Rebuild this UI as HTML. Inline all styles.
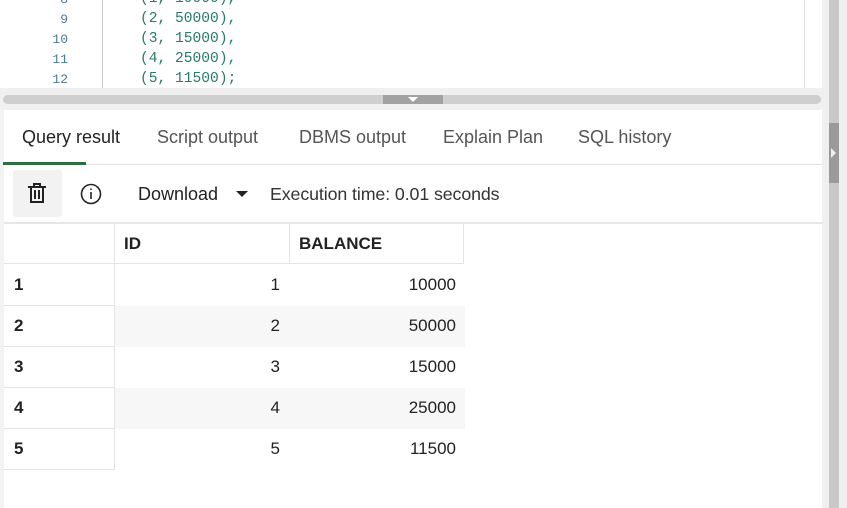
<!DOCTYPE html>
<html><head><style>
*{margin:0;padding:0;box-sizing:border-box}
body{width:847px;height:508px;overflow:hidden;background:#fff;font-family:"Liberation Sans",sans-serif;position:relative}
.abs{position:absolute}
.code{font-family:"Liberation Mono",monospace;font-size:14.6px;color:#2a7a6a}
.ln{font-family:"Liberation Mono",monospace;font-size:13px;color:#4a7a9a;width:68px;text-align:right}
.tab{position:absolute;top:127px;font-size:18px;color:#555}
.cell{position:absolute;font-size:17px;color:#222}
</style></head><body>
<div class="abs" style="left:0;top:0;width:822px;height:88px;background:#fff"></div>
<div class="abs" style="left:102px;top:0;width:1px;height:88px;background:#ccc"></div>
<div class="abs" style="left:804px;top:0;width:1px;height:88px;background:#ddd"></div>
<div class="abs ln" style="left:0;top:-8px">8</div><div class="abs code" style="left:140px;top:-9px">(1, 10000),</div>
<div class="abs ln" style="left:0;top:12px">9</div><div class="abs code" style="left:140px;top:11px">(2, 50000),</div>
<div class="abs ln" style="left:0;top:32px">10</div><div class="abs code" style="left:140px;top:31px">(3, 15000),</div>
<div class="abs ln" style="left:0;top:52px">11</div><div class="abs code" style="left:140px;top:51px">(4, 25000),</div>
<div class="abs ln" style="left:0;top:72px">12</div><div class="abs code" style="left:140px;top:71px">(5, 11500);</div>
<div class="abs" style="left:0;top:88px;width:822px;height:22px;background:#f0f0f0"></div>
<div class="abs" style="left:3px;top:95px;width:818px;height:9px;background:#cfcfcf;border-radius:5px"></div>
<div class="abs" style="left:383px;top:95px;width:60px;height:9px;background:#a2a2a2"></div>
<div class="abs" style="left:408px;top:97px;width:0;height:0;border-left:5px solid transparent;border-right:5px solid transparent;border-top:5px solid #fff"></div>
<div class="abs" style="left:822px;top:0;width:25px;height:508px;background:#efefef"></div>
<div class="abs" style="left:829px;top:0;width:10px;height:508px;background:#c8c8c8"></div>
<div class="abs" style="left:829px;top:123px;width:10px;height:60px;background:#9a9a9a"></div>
<div class="abs" style="left:831px;top:148px;width:0;height:0;border-top:5px solid transparent;border-bottom:5px solid transparent;border-left:5px solid #eee"></div>
<div class="abs" style="left:0;top:110px;width:4px;height:398px;background:#f3f3f3"></div>
<div class="tab" style="left:22px;color:#222">Query result</div>
<div class="tab" style="left:157px">Script output</div>
<div class="tab" style="left:299px">DBMS output</div>
<div class="tab" style="left:443px">Explain Plan</div>
<div class="tab" style="left:578px">SQL history</div>
<div class="abs" style="left:3px;top:162px;width:83px;height:3px;background:#2e6e3e"></div>
<div class="abs" style="left:86px;top:164px;width:736px;height:1px;background:#e2e2e2"></div>
<div class="abs" style="left:13px;top:170px;width:49px;height:47px;background:#f2f2f2;border-radius:3px"></div>
<svg class="abs" style="left:26px;top:182px" width="22" height="22" viewBox="0 0 22 22" fill="none" stroke="#222" stroke-width="2"><path d="M2 5h18M8 5V2h6v3M5 5v15h12V5M9 8v9M13 8v9"/></svg>
<svg class="abs" style="left:80px;top:183px" width="22" height="22" viewBox="0 0 22 22" fill="none" stroke="#222" stroke-width="1.6"><circle cx="11" cy="11" r="9.5"/><path d="M11 9v7M11 5.5v1.5"/></svg>
<div class="abs" style="left:138px;top:184px;font-size:18px;color:#222">Download</div>
<div class="abs" style="left:236px;top:191px;width:0;height:0;border-left:6px solid transparent;border-right:6px solid transparent;border-top:6px solid #222"></div>
<div class="abs" style="left:270px;top:184px;font-size:17.8px;letter-spacing:-0.1px;color:#333">Execution time: 0.01 seconds</div>
<div class="abs" style="left:4px;top:222px;width:818px;height:2px;background:#e6e6e6"></div>
<div class="abs" style="left:4px;top:224px;width:460px;height:40px;border-bottom:1px solid #e4e4e4;border-right:1px solid #e4e4e4"></div>
<div class="abs" style="left:114px;top:224px;width:1px;height:246px;background:#e4e4e4"></div>
<div class="abs" style="left:289px;top:224px;width:1px;height:40px;background:#e4e4e4"></div>
<div class="cell" style="left:124px;top:234px;font-weight:bold">ID</div>
<div class="cell" style="left:299px;top:234px;font-weight:bold">BALANCE</div>
<div class="abs" style="left:115px;top:306px;width:350px;height:41px;background:#f7f7f7"></div>
<div class="abs" style="left:115px;top:388px;width:350px;height:41px;background:#f7f7f7"></div>
<div class="abs" style="left:4px;top:305px;width:110px;height:1px;background:#e4e4e4"></div>
<div class="abs" style="left:4px;top:346px;width:110px;height:1px;background:#e4e4e4"></div>
<div class="abs" style="left:4px;top:387px;width:110px;height:1px;background:#e4e4e4"></div>
<div class="abs" style="left:4px;top:428px;width:110px;height:1px;background:#e4e4e4"></div>
<div class="abs" style="left:4px;top:469px;width:110px;height:1px;background:#e4e4e4"></div>
<div class="cell" style="left:14px;top:275px;font-weight:bold">1</div>
<div class="cell" style="left:14px;top:316px;font-weight:bold">2</div>
<div class="cell" style="left:14px;top:357px;font-weight:bold">3</div>
<div class="cell" style="left:14px;top:398px;font-weight:bold">4</div>
<div class="cell" style="left:14px;top:439px;font-weight:bold">5</div>
<div class="cell" style="left:200px;width:80px;text-align:right;top:275px">1</div>
<div class="cell" style="left:200px;width:80px;text-align:right;top:316px">2</div>
<div class="cell" style="left:200px;width:80px;text-align:right;top:357px">3</div>
<div class="cell" style="left:200px;width:80px;text-align:right;top:398px">4</div>
<div class="cell" style="left:200px;width:80px;text-align:right;top:439px">5</div>
<div class="cell" style="left:355px;width:101px;text-align:right;top:275px">10000</div>
<div class="cell" style="left:355px;width:101px;text-align:right;top:316px">50000</div>
<div class="cell" style="left:355px;width:101px;text-align:right;top:357px">15000</div>
<div class="cell" style="left:355px;width:101px;text-align:right;top:398px">25000</div>
<div class="cell" style="left:355px;width:101px;text-align:right;top:439px">11500</div>
</body></html>
